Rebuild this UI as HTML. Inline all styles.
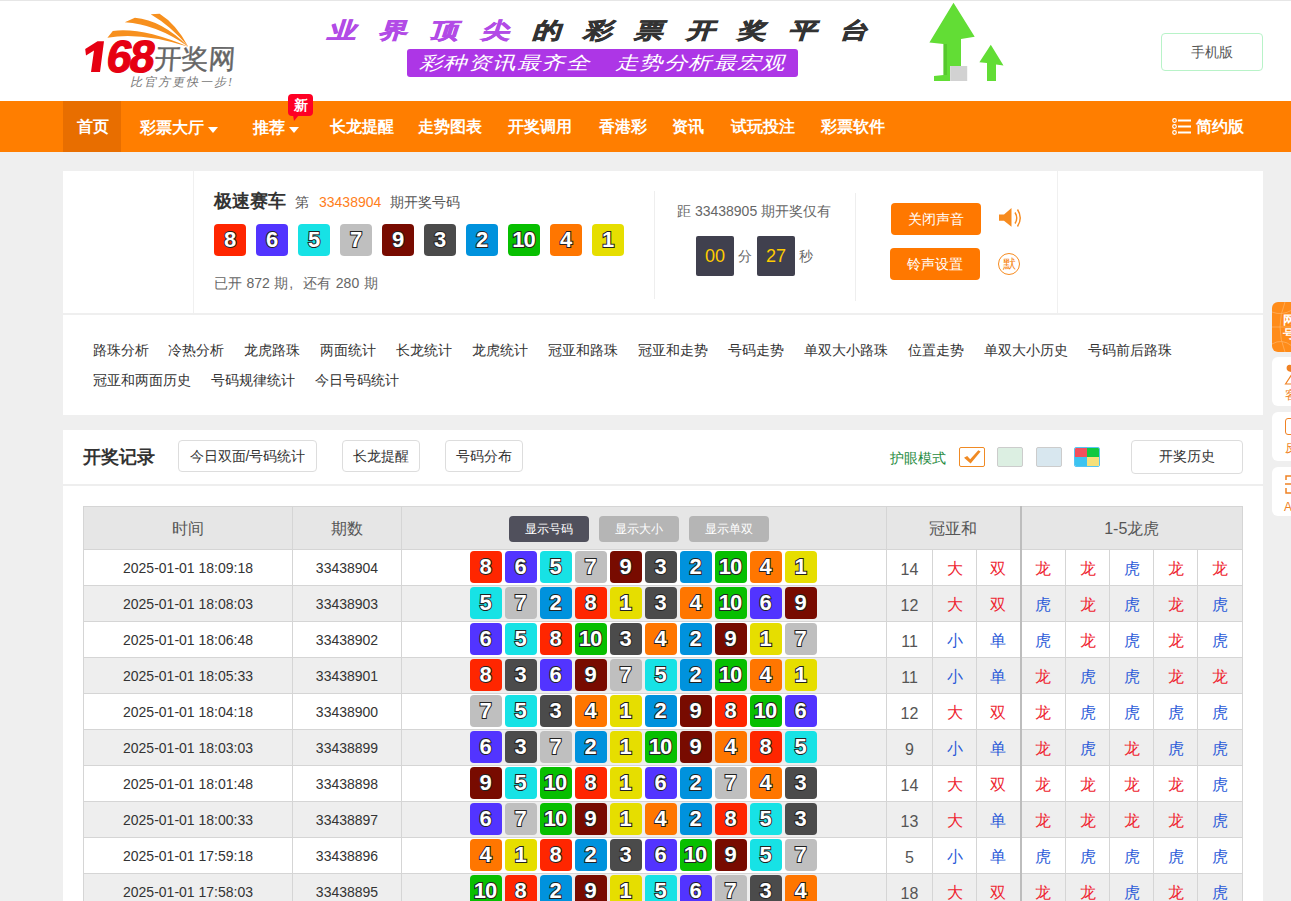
<!DOCTYPE html>
<html><head><meta charset="utf-8">
<style>
*{margin:0;padding:0;box-sizing:border-box}
html,body{width:1291px;height:901px;overflow:hidden}
body{background:#efefef;font-family:"Liberation Sans",sans-serif;font-size:14px;color:#333;position:relative}
.abs{position:absolute}
#hdr{position:absolute;left:0;top:0;width:1291px;height:101px;background:#fff;border-top:1px solid #e6e6e6}
#nav{position:absolute;left:0;top:101px;width:1291px;height:51px;background:#ff7e00}
#nav .it{position:absolute;top:0;height:51px;line-height:51px;color:#fff;font-size:16px;font-weight:bold;white-space:nowrap}
#nav .act{background:#e86e00}
#nav .arr{display:inline-block;width:0;height:0;border-left:5px solid transparent;border-right:5px solid transparent;border-top:6px solid #fff;vertical-align:middle;margin-left:4px;position:relative;top:1px}
.card{position:absolute;background:#fff}
.tb{position:absolute;top:224px;width:32px;height:32px;border-radius:4px;color:#fff;font-style:normal;font-weight:bold;font-size:22px;line-height:31px;text-align:center;letter-spacing:-1px;text-indent:-1px;-webkit-text-stroke:2px #222;paint-order:stroke fill}
.b{display:inline-block;width:32px;height:32px;border-radius:4px;color:#fff;font-style:normal;font-weight:bold;font-size:22px;line-height:31px;text-align:center;margin-right:3px;vertical-align:top;letter-spacing:-1px;text-indent:-1px;-webkit-text-stroke:2px #222;paint-order:stroke fill}
.b:last-child{margin-right:0}
.n1{background:#e6de00}.n2{background:#0092dd}.n3{background:#4b4b4b}.n4{background:#ff7600}.n5{background:#17e2e5}.n6{background:#5234ff}.n7{background:#bfbfbf}.n8{background:#ff2600}.n9{background:#780b00}.n10{background:#07bf00}
.vl{position:absolute;width:1px;background:#eee}
.links a{position:absolute;color:#333;text-decoration:none;font-size:14px;white-space:nowrap}
.btn{position:absolute;border:1px solid #ddd;border-radius:4px;background:#fff;color:#333;text-align:center;font-size:14px}
.obtn{position:absolute;background:#ff7800;color:#fff;border-radius:4px;text-align:center;font-size:14px;width:90px;height:32px;line-height:32px}
table{position:absolute;left:83px;top:506px;border-collapse:collapse;table-layout:fixed;width:1160px}
td,th{border:1px solid #d5d5d5;text-align:center;font-size:14px;color:#333;padding:0;white-space:nowrap}
th{background:#e6e6e6;font-weight:normal;font-size:16px;color:#555;height:43px}
tr.odd td{background:#fff}
tr.even td{background:#eee}
td{height:36px}
td.balls{font-size:0;padding:1px 0 0 0;vertical-align:top}
.b{position:relative;left:-1px}
td.lh,td.s16{font-size:16px;padding-top:4px}
th{padding-top:2px}
td.sum{color:#555}
td.sep{border-right:2px solid #bdbdbd}
th.sep{border-right:2px solid #bdbdbd}
.tab{display:inline-block;width:80px;height:26px;line-height:26px;border-radius:4px;color:#fff;font-size:12px;margin:0 10px 0 0;vertical-align:middle}
.side{position:absolute;left:1272px;width:50px;height:50px;border-radius:6px;background:#fff}
</style></head><body>
<div id="hdr">
  <!-- logo -->
  <svg class="abs" style="left:0;top:-1px" width="240" height="60" viewBox="0 0 240 60">
    <path d="M107.4 37.8 L112.8 30.9 Q142 27 188.3 46.7 Q140 31.5 107.4 37.8 Z" fill="#f7901e"/>
    <path d="M124.8 22.3 L134.9 17.7 Q162 20 188.3 46.7 Q156 24 124.8 22.3 Z" fill="#f7901e"/>
    <path d="M150.7 14.2 L159.6 13.8 Q176 24 188.3 46.7 Q171 26 150.7 14.2 Z" fill="#f7901e"/>
  </svg>
  <div class="abs" style="left:81px;top:31px;font-size:45px;font-weight:bold;color:#e60012;letter-spacing:-2.5px;line-height:50px;-webkit-text-stroke:1.2px #e60012;transform:skewX(-9deg);transform-origin:0 100%"><span style="visibility:hidden">1</span>68</div>
  <svg class="abs" style="left:0;top:-1px" width="110" height="80" viewBox="0 0 110 80"><path d="M97.5 41.3 L104 41.3 L100 72 L91 72 L94 50.5 L86 55.5 L85.2 49 Z" fill="#e60012"/></svg>
  <div class="abs" style="left:155px;top:40px;font-size:27px;color:#666;line-height:36px;transform:skewX(-4deg);-webkit-text-stroke:0.4px #666">开奖网</div>
  <div class="abs" style="left:130px;top:72px;font-size:12px;color:#777;font-style:italic;line-height:18px;letter-spacing:2px;font-family:'Liberation Serif',serif">比官方更快一步!</div>
  <!-- banner -->
  <div class="abs" style="left:327px;top:14px;font-size:22px;font-weight:bold;font-style:italic;line-height:32px;white-space:nowrap;letter-spacing:17.4px;transform:scaleX(1.3);transform-origin:0 0;-webkit-text-stroke:0.6px currentColor"><span style="color:#b24be6">业界顶尖</span><span style="color:#333">的彩票开奖平台</span></div>
  <div class="abs" style="left:407px;top:48px;width:391px;height:28px;background:#ad36e6;border-radius:3px"></div>
  <div class="abs" style="left:419px;top:49px;font-size:18px;font-style:italic;color:#fff;line-height:27px;white-space:nowrap;letter-spacing:0.8px;transform:scaleX(1.3);transform-origin:0 0">彩种资讯最齐全<span style="margin-left:19px">走势分析最宏观</span></div>
  <svg class="abs" style="left:920px;top:-1px" width="90" height="85" viewBox="0 0 90 85">
    <path d="M33.5 2.8 L54.7 36.8 L41 39 L41 66 L30 66 L30 81 L14 81 L14 76 L23.6 75 L23.6 44 L9.4 42.5 Z" fill="#62dd35"/>
    <path d="M23.6 44 L27 44 L27 75 L23.6 75 Z" fill="#56c82e"/>
    <rect x="30.2" y="66" width="17" height="15" fill="#d2d2d2"/>
    <path d="M70.8 44.8 L83.5 65.6 L76 64.5 L76 81 L67 81 L67 63 L59.4 62.3 Z" fill="#62dd35"/>
  </svg>
  <div class="btn" style="left:1161px;top:32px;width:102px;height:38px;line-height:36px;border-color:#b8f3c8;color:#555">手机版</div>
</div>
<div id="nav">
  <div class="it act" style="left:63px;width:58px;padding-left:14px">首页</div>
  <div class="it" style="left:140px;top:1px">彩票大厅<span class="arr"></span></div>
  <div class="it" style="left:253px;top:1px">推荐<span class="arr"></span></div>
  <div class="abs" style="left:288px;top:-7px;width:25px;height:22px;background:#ff0024;border-radius:4px;color:#fff;font-size:14px;font-weight:bold;line-height:22px;text-align:center">新</div>
  <svg class="abs" style="left:288px;top:14px" width="14" height="8" viewBox="0 0 14 8"><path d="M5 0 L11 0 L6 6 Z" fill="#ff0024"/></svg>
  <div class="it" style="left:330px">长龙提醒</div>
  <div class="it" style="left:418px">走势图表</div>
  <div class="it" style="left:508px">开奖调用</div>
  <div class="it" style="left:599px">香港彩</div>
  <div class="it" style="left:672px">资讯</div>
  <div class="it" style="left:731px">试玩投注</div>
  <div class="it" style="left:821px">彩票软件</div>
  <svg class="abs" style="left:1172px;top:118px" width="21" height="18" viewBox="0 0 21 18"></svg>
  <div class="it" style="left:1196px">简约版</div>
</div>
<svg class="abs" style="left:1172px;top:118px" width="21" height="18" viewBox="0 0 21 18">
  <circle cx="2.5" cy="2.5" r="1.8" fill="none" stroke="#fff" stroke-width="1.2"/>
  <circle cx="2.5" cy="8.5" r="1.8" fill="none" stroke="#fff" stroke-width="1.2"/>
  <circle cx="2.5" cy="14.5" r="1.8" fill="none" stroke="#fff" stroke-width="1.2"/>
  <rect x="6" y="1.5" width="13" height="2" fill="#fff"/>
  <rect x="6" y="7.5" width="13" height="2" fill="#fff"/>
  <rect x="6" y="13.5" width="13" height="2" fill="#fff"/>
</svg>

<!-- top card -->
<div class="card" style="left:63px;top:171px;width:1200px;height:142px"></div>
<div class="vl" style="left:193px;top:171px;height:142px;background:#f0f0f0"></div>
<div class="abs" style="left:214px;top:188px;font-size:18px;font-weight:bold;color:#333;line-height:26px">极速赛车</div>
<div class="abs" style="left:295px;top:192px;font-size:14px;color:#555;line-height:20px;white-space:nowrap">第<span style="color:#ff7e1a;margin-left:10px">33438904</span><span style="margin-left:9px">期开奖号码</span></div>
<i class="tb n8" style="left:214px">8</i><i class="tb n6" style="left:256px">6</i><i class="tb n5" style="left:298px">5</i><i class="tb n7" style="left:340px">7</i><i class="tb n9" style="left:382px">9</i><i class="tb n3" style="left:424px">3</i><i class="tb n2" style="left:466px">2</i><i class="tb n10" style="left:508px">10</i><i class="tb n4" style="left:550px">4</i><i class="tb n1" style="left:592px">1</i>
<div class="abs" style="left:214px;top:273px;font-size:14px;color:#666;line-height:20px;white-space:nowrap;word-spacing:0.6px">已开 872 期<span style="display:inline-block;width:15px;text-indent:1px">,</span>还有 280 期</div>
<div class="vl" style="left:654px;top:191px;height:108px"></div>
<div class="abs" style="left:677px;top:201px;font-size:14px;color:#666;line-height:20px;white-space:nowrap">距 33438905 期开奖仅有</div>
<div class="abs" style="left:696px;top:236px;width:38px;height:40px;background:#40404e;border-radius:2px;color:#ffcc00;font-size:18px;line-height:40px;text-align:center">00</div>
<div class="abs" style="left:738px;top:246px;font-size:14px;color:#666;line-height:20px">分</div>
<div class="abs" style="left:757px;top:236px;width:38px;height:40px;background:#40404e;border-radius:2px;color:#ffcc00;font-size:18px;line-height:40px;text-align:center">27</div>
<div class="abs" style="left:799px;top:246px;font-size:14px;color:#666;line-height:20px">秒</div>
<div class="vl" style="left:855px;top:193px;height:108px"></div>
<div class="obtn" style="left:891px;top:203px">关闭声音</div>
<div class="obtn" style="left:890px;top:248px">铃声设置</div>
<svg class="abs" style="left:998px;top:207px" width="26" height="22" viewBox="0 0 26 22">
  <path d="M1 7.5 L6 7.5 L13.5 1 L13.5 19.7 L6 13.8 L1 13.8 Z" fill="#f78b1f"/>
  <path d="M17 5.5 Q20.5 11 17 16.5" fill="none" stroke="#f78b1f" stroke-width="1.4"/>
  <path d="M19.5 2.5 Q25 11 19.5 19.5" fill="none" stroke="#f78b1f" stroke-width="1.4"/>
</svg>
<div class="abs" style="left:998px;top:253px;width:22px;height:22px;border:1px solid #f78b1f;border-radius:50%;color:#f78b1f;font-size:13px;line-height:20px;text-align:center">默</div>
<div class="vl" style="left:1057px;top:171px;height:142px;background:#f0f0f0"></div>

<!-- links card -->
<div class="card links" style="left:63px;top:315px;width:1200px;height:100px"></div>
<div class="links">
  <a style="left:93px;top:342px">路珠分析</a>
  <a style="left:168px;top:342px">冷热分析</a>
  <a style="left:244px;top:342px">龙虎路珠</a>
  <a style="left:320px;top:342px">两面统计</a>
  <a style="left:396px;top:342px">长龙统计</a>
  <a style="left:472px;top:342px">龙虎统计</a>
  <a style="left:548px;top:342px">冠亚和路珠</a>
  <a style="left:638px;top:342px">冠亚和走势</a>
  <a style="left:728px;top:342px">号码走势</a>
  <a style="left:804px;top:342px">单双大小路珠</a>
  <a style="left:908px;top:342px">位置走势</a>
  <a style="left:984px;top:342px">单双大小历史</a>
  <a style="left:1088px;top:342px">号码前后路珠</a>
  <a style="left:93px;top:372px">冠亚和两面历史</a>
  <a style="left:211px;top:372px">号码规律统计</a>
  <a style="left:315px;top:372px">今日号码统计</a>
</div>

<!-- record card -->
<div class="card" style="left:63px;top:430px;width:1200px;height:471px"></div>
<div class="abs" style="left:63px;top:484px;width:1200px;height:2px;background:#eee"></div>
<div class="abs" style="left:83px;top:444px;font-size:18px;font-weight:bold;color:#333;line-height:26px">开奖记录</div>
<div class="btn" style="left:178px;top:440px;width:139px;height:32px;line-height:30px">今日双面/号码统计</div>
<div class="btn" style="left:342px;top:440px;width:78px;height:32px;line-height:30px">长龙提醒</div>
<div class="btn" style="left:445px;top:440px;width:78px;height:32px;line-height:30px">号码分布</div>
<div class="abs" style="left:890px;top:448px;font-size:14px;color:#1f8b3e;line-height:20px">护眼模式</div>
<div class="abs" style="left:959px;top:447px;width:26px;height:20px;border:1px solid #f08a24;border-radius:2px;background:#fff"></div>
<svg class="abs" style="left:959px;top:447px" width="26" height="20" viewBox="0 0 26 20"><path d="M5 10.8 L8.2 9 L11.2 12.3 L19.3 3.2 L21.6 4.4 L11.6 16.6 Z" fill="#f08a24"/></svg>
<div class="abs" style="left:997px;top:447px;width:26px;height:20px;border:1px solid #ccc;border-radius:2px;background:#dcefe2"></div>
<div class="abs" style="left:1036px;top:447px;width:26px;height:20px;border:1px solid #ccc;border-radius:2px;background:#d8e7ef"></div>
<div class="abs" style="left:1074px;top:447px;width:26px;height:20px;border:1px solid #55c5f5;border-radius:2px;overflow:hidden">
  <div class="abs" style="left:0;top:0;width:12px;height:9px;background:#f24f5c"></div>
  <div class="abs" style="left:12px;top:0;width:12px;height:9px;background:#10c840"></div>
  <div class="abs" style="left:0;top:9px;width:12px;height:9px;background:#3cc3f0"></div>
  <div class="abs" style="left:12px;top:9px;width:12px;height:9px;background:#f5e07a"></div>
</div>
<div class="btn" style="left:1131px;top:440px;width:112px;height:34px;line-height:31px">开奖历史</div>

<table>
<colgroup><col style="width:209px"><col style="width:109px"><col style="width:485px"><col style="width:46px"><col style="width:44px"><col style="width:44px"><col style="width:45px"><col style="width:44px"><col style="width:44px"><col style="width:44px"><col style="width:45px"></colgroup>
<tr><th>时间</th><th>期数</th><th><span class="tab" style="background:#50505c">显示号码</span><span class="tab" style="background:#b5b5b5">显示大小</span><span class="tab" style="background:#b5b5b5">显示单双</span></th><th colspan="3" class="sep">冠亚和</th><th colspan="5">1-5龙虎</th></tr>
<tr class="odd"><td>2025-01-01 18:09:18</td><td>33438904</td><td class="balls"><i class="b n8">8</i><i class="b n6">6</i><i class="b n5">5</i><i class="b n7">7</i><i class="b n9">9</i><i class="b n3">3</i><i class="b n2">2</i><i class="b n10">10</i><i class="b n4">4</i><i class="b n1">1</i></td><td class="sum s16">14</td><td class="s16" style="color:#ee2430">大</td><td style="color:#ee2430" class="sep s16">双</td><td class="lh" style="color:#ee2430">龙</td><td class="lh" style="color:#ee2430">龙</td><td class="lh" style="color:#2a5ad8">虎</td><td class="lh" style="color:#ee2430">龙</td><td class="lh" style="color:#ee2430">龙</td></tr>
<tr class="even"><td>2025-01-01 18:08:03</td><td>33438903</td><td class="balls"><i class="b n5">5</i><i class="b n7">7</i><i class="b n2">2</i><i class="b n8">8</i><i class="b n1">1</i><i class="b n3">3</i><i class="b n4">4</i><i class="b n10">10</i><i class="b n6">6</i><i class="b n9">9</i></td><td class="sum s16">12</td><td class="s16" style="color:#ee2430">大</td><td style="color:#ee2430" class="sep s16">双</td><td class="lh" style="color:#2a5ad8">虎</td><td class="lh" style="color:#ee2430">龙</td><td class="lh" style="color:#2a5ad8">虎</td><td class="lh" style="color:#ee2430">龙</td><td class="lh" style="color:#2a5ad8">虎</td></tr>
<tr class="odd"><td>2025-01-01 18:06:48</td><td>33438902</td><td class="balls"><i class="b n6">6</i><i class="b n5">5</i><i class="b n8">8</i><i class="b n10">10</i><i class="b n3">3</i><i class="b n4">4</i><i class="b n2">2</i><i class="b n9">9</i><i class="b n1">1</i><i class="b n7">7</i></td><td class="sum s16">11</td><td class="s16" style="color:#2a5ad8">小</td><td style="color:#2a5ad8" class="sep s16">单</td><td class="lh" style="color:#2a5ad8">虎</td><td class="lh" style="color:#ee2430">龙</td><td class="lh" style="color:#2a5ad8">虎</td><td class="lh" style="color:#ee2430">龙</td><td class="lh" style="color:#2a5ad8">虎</td></tr>
<tr class="even"><td>2025-01-01 18:05:33</td><td>33438901</td><td class="balls"><i class="b n8">8</i><i class="b n3">3</i><i class="b n6">6</i><i class="b n9">9</i><i class="b n7">7</i><i class="b n5">5</i><i class="b n2">2</i><i class="b n10">10</i><i class="b n4">4</i><i class="b n1">1</i></td><td class="sum s16">11</td><td class="s16" style="color:#2a5ad8">小</td><td style="color:#2a5ad8" class="sep s16">单</td><td class="lh" style="color:#ee2430">龙</td><td class="lh" style="color:#2a5ad8">虎</td><td class="lh" style="color:#2a5ad8">虎</td><td class="lh" style="color:#ee2430">龙</td><td class="lh" style="color:#ee2430">龙</td></tr>
<tr class="odd"><td>2025-01-01 18:04:18</td><td>33438900</td><td class="balls"><i class="b n7">7</i><i class="b n5">5</i><i class="b n3">3</i><i class="b n4">4</i><i class="b n1">1</i><i class="b n2">2</i><i class="b n9">9</i><i class="b n8">8</i><i class="b n10">10</i><i class="b n6">6</i></td><td class="sum s16">12</td><td class="s16" style="color:#ee2430">大</td><td style="color:#ee2430" class="sep s16">双</td><td class="lh" style="color:#ee2430">龙</td><td class="lh" style="color:#2a5ad8">虎</td><td class="lh" style="color:#2a5ad8">虎</td><td class="lh" style="color:#2a5ad8">虎</td><td class="lh" style="color:#2a5ad8">虎</td></tr>
<tr class="even"><td>2025-01-01 18:03:03</td><td>33438899</td><td class="balls"><i class="b n6">6</i><i class="b n3">3</i><i class="b n7">7</i><i class="b n2">2</i><i class="b n1">1</i><i class="b n10">10</i><i class="b n9">9</i><i class="b n4">4</i><i class="b n8">8</i><i class="b n5">5</i></td><td class="sum s16">9</td><td class="s16" style="color:#2a5ad8">小</td><td style="color:#2a5ad8" class="sep s16">单</td><td class="lh" style="color:#ee2430">龙</td><td class="lh" style="color:#2a5ad8">虎</td><td class="lh" style="color:#ee2430">龙</td><td class="lh" style="color:#2a5ad8">虎</td><td class="lh" style="color:#2a5ad8">虎</td></tr>
<tr class="odd"><td>2025-01-01 18:01:48</td><td>33438898</td><td class="balls"><i class="b n9">9</i><i class="b n5">5</i><i class="b n10">10</i><i class="b n8">8</i><i class="b n1">1</i><i class="b n6">6</i><i class="b n2">2</i><i class="b n7">7</i><i class="b n4">4</i><i class="b n3">3</i></td><td class="sum s16">14</td><td class="s16" style="color:#ee2430">大</td><td style="color:#ee2430" class="sep s16">双</td><td class="lh" style="color:#ee2430">龙</td><td class="lh" style="color:#ee2430">龙</td><td class="lh" style="color:#ee2430">龙</td><td class="lh" style="color:#ee2430">龙</td><td class="lh" style="color:#2a5ad8">虎</td></tr>
<tr class="even"><td>2025-01-01 18:00:33</td><td>33438897</td><td class="balls"><i class="b n6">6</i><i class="b n7">7</i><i class="b n10">10</i><i class="b n9">9</i><i class="b n1">1</i><i class="b n4">4</i><i class="b n2">2</i><i class="b n8">8</i><i class="b n5">5</i><i class="b n3">3</i></td><td class="sum s16">13</td><td class="s16" style="color:#ee2430">大</td><td style="color:#2a5ad8" class="sep s16">单</td><td class="lh" style="color:#ee2430">龙</td><td class="lh" style="color:#ee2430">龙</td><td class="lh" style="color:#ee2430">龙</td><td class="lh" style="color:#ee2430">龙</td><td class="lh" style="color:#2a5ad8">虎</td></tr>
<tr class="odd"><td>2025-01-01 17:59:18</td><td>33438896</td><td class="balls"><i class="b n4">4</i><i class="b n1">1</i><i class="b n8">8</i><i class="b n2">2</i><i class="b n3">3</i><i class="b n6">6</i><i class="b n10">10</i><i class="b n9">9</i><i class="b n5">5</i><i class="b n7">7</i></td><td class="sum s16">5</td><td class="s16" style="color:#2a5ad8">小</td><td style="color:#2a5ad8" class="sep s16">单</td><td class="lh" style="color:#2a5ad8">虎</td><td class="lh" style="color:#2a5ad8">虎</td><td class="lh" style="color:#2a5ad8">虎</td><td class="lh" style="color:#2a5ad8">虎</td><td class="lh" style="color:#2a5ad8">虎</td></tr>
<tr class="even"><td>2025-01-01 17:58:03</td><td>33438895</td><td class="balls"><i class="b n10">10</i><i class="b n8">8</i><i class="b n2">2</i><i class="b n9">9</i><i class="b n1">1</i><i class="b n5">5</i><i class="b n6">6</i><i class="b n7">7</i><i class="b n3">3</i><i class="b n4">4</i></td><td class="sum s16">18</td><td class="s16" style="color:#ee2430">大</td><td style="color:#ee2430" class="sep s16">双</td><td class="lh" style="color:#ee2430">龙</td><td class="lh" style="color:#ee2430">龙</td><td class="lh" style="color:#2a5ad8">虎</td><td class="lh" style="color:#ee2430">龙</td><td class="lh" style="color:#2a5ad8">虎</td></tr>
</table>

<!-- side tiles -->
<div class="side" style="top:302px;height:50px;background:#ff8c1a;overflow:hidden">
  <svg class="abs" style="left:0;top:0" width="30" height="50" viewBox="0 0 30 50">
    <path d="M0 10 Q10 14 20 8 M0 42 Q10 36 20 44 M13 0 Q3 25 13 50 M0 25 L30 25" fill="none" stroke="#ffb060" stroke-width="0.8"/>
  </svg>
  <div class="abs" style="left:11px;top:11px;font-size:12px;line-height:14px;color:#fff;font-weight:bold;width:14px">网<br>号</div>
</div>
<div class="side" style="top:357px;height:49px">
  <svg class="abs" style="left:10px;top:6px" width="20" height="24" viewBox="0 0 20 24">
    <path d="M9 9 Q3 8 5 3 Q7 1 9 2 Z" fill="#f08224"/>
    <path d="M3.5 21 L10 11 L16.5 21 Z" fill="none" stroke="#f08224" stroke-width="1.2"/>
  </svg>
  <div class="abs" style="left:13px;top:31px;font-size:12px;line-height:14px;color:#f08224">客服</div>
</div>
<div class="side" style="top:412px;height:49px">
  <div class="abs" style="left:13px;top:6px;width:14px;height:17px;border:1.5px solid #f08224;border-radius:3px"></div>
  <div class="abs" style="left:13px;top:29px;font-size:12px;line-height:14px;color:#f08224">反馈</div>
</div>
<div class="side" style="top:467px;height:49px">
  <svg class="abs" style="left:12px;top:7px" width="18" height="21" viewBox="0 0 18 21">
    <path d="M2 6 L2 2 L12 2 M2 14 L2 19 L12 19 M1 10 L14 10" fill="none" stroke="#f08224" stroke-width="1.5"/>
  </svg>
  <div class="abs" style="left:12px;top:33px;font-size:12px;line-height:14px;color:#f08224">APP</div>
</div>
</body></html>
